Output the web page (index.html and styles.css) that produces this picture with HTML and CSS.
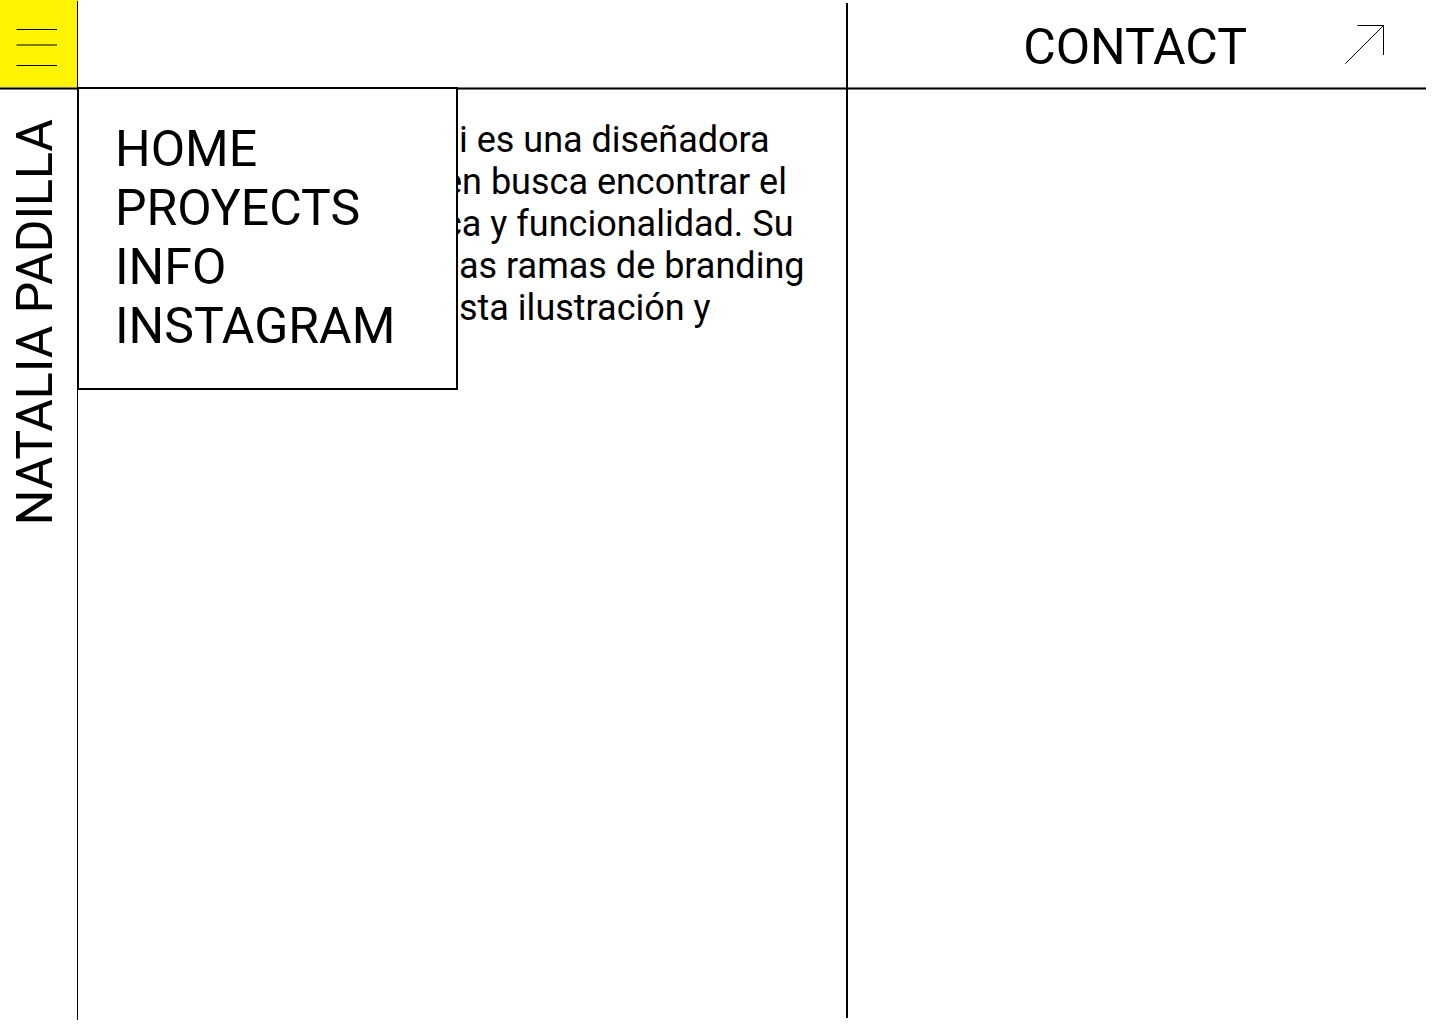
FILE: index.html
```html
<!DOCTYPE html>
<html lang="es">
<head>
<meta charset="utf-8">
<meta name="viewport" content="width=device-width, initial-scale=1">
<title>Natalia Padilla</title>
<link rel="stylesheet" href="styles.css">
</head>
<body>
<div class="page">
  <button class="toggle" type="button" aria-label="Menu" aria-expanded="true" aria-controls="menu">
    <svg class="toggle-icon" width="41" height="37" viewBox="0 0 41 37" fill="none" stroke="#000" aria-hidden="true">
      <path d="M0.5 0.5H41M0.5 16H41M0.5 36.5H41"/>
    </svg>
  </button>
  <a class="contact" href="#contact">
    <span>CONTACT</span>
    <svg class="contact-arrow" width="40" height="40" viewBox="0 0 40 40" fill="none" stroke="#000" aria-hidden="true">
      <path d="M12.5 1.5H39M38.5 1.5V31M0.3 39.7L38.5 1.5"/>
    </svg>
  </a>
  <div class="rule"></div>
  <div class="divider divider-side"></div>
  <div class="divider divider-main"></div>
  <a class="brand" href="#home">NATALIA PADILLA</a>
  <main class="content">
    <p class="intro">
      <span class="line">i es una diseñadora</span>
      <span class="line tuck">en busca encontrar el</span>
      <span class="line tuck">ca y funcionalidad. Su</span>
      <span class="line">as ramas de branding</span>
      <span class="line">sta ilustración y</span>
    </p>
  </main>
  <nav class="menu" id="menu">
    <a href="#home">HOME</a>
    <a href="#proyects">PROYECTS</a>
    <a href="#info">INFO</a>
    <a href="#instagram">INSTAGRAM</a>
  </nav>
</div>
</body>
</html>
```
FILE: styles.css
```css
* {
  box-sizing: border-box;
}

body {
  margin: 0;
  background: #fff;
  color: #000;
  font-family: Roboto, "Liberation Sans", sans-serif;
  font-size: 50px;
  line-height: 59px;
}

a {
  color: inherit;
  text-decoration: none;
}

.page {
  display: grid;
  grid-template-columns: 78px minmax(0, 768fr) minmax(0, 580fr);
  grid-template-rows: 87px 3px 1fr;
  min-height: 100vh;
  padding-right: 14px;
}

.toggle {
  grid-area: 1 / 1;
  display: flex;
  align-items: flex-start;
  margin: 0;
  padding: 29px 16px 0;
  border: 0;
  background: #fff500;
  cursor: pointer;
}

.toggle-icon {
  flex: none;
}

.contact {
  grid-area: 1 / 3;
  display: flex;
  align-items: flex-start;
  justify-content: flex-end;
  gap: 98px;
  padding: 18px 41px 0 0;
}

.contact-arrow {
  margin-top: 6px;
}

.rule {
  grid-area: 2 / 1 / 3 / -1;
  border-top: 1px solid #777;
  border-bottom: 1px solid #777;
  background: #000;
}

.divider {
  pointer-events: none;
}

.divider-side {
  grid-area: 1 / 1 / -1 / 2;
  margin: 1px 0 4px;
  border-right: 1px solid #000;
}

.divider-main {
  grid-area: 1 / 3 / -1 / 4;
  margin: 3px 0 6px;
  border-left: 2px solid #000;
}

.brand {
  grid-area: 3 / 1;
  place-self: start;
  margin: 29px 0 0 6px;
  writing-mode: vertical-rl;
  transform: rotate(180deg);
}

.content {
  grid-area: 3 / 2;
  padding: 29px 0 0 381px;
}

.intro {
  margin: 0;
  font-size: 36px;
  line-height: 42px;
}

.line {
  display: block;
  white-space: nowrap;
}

/* Lines that run beneath the open menu */
.tuck {
  margin-left: -16px;
}

.menu {
  grid-area: 2 / 2 / -1 / 3;
  z-index: 1;
  place-self: start;
  display: flex;
  flex-direction: column;
  width: 381px;
  margin-left: -1px;
  padding: 31px 36px 32px;
  border: 2px solid #000;
  background: #fff;
}
```
